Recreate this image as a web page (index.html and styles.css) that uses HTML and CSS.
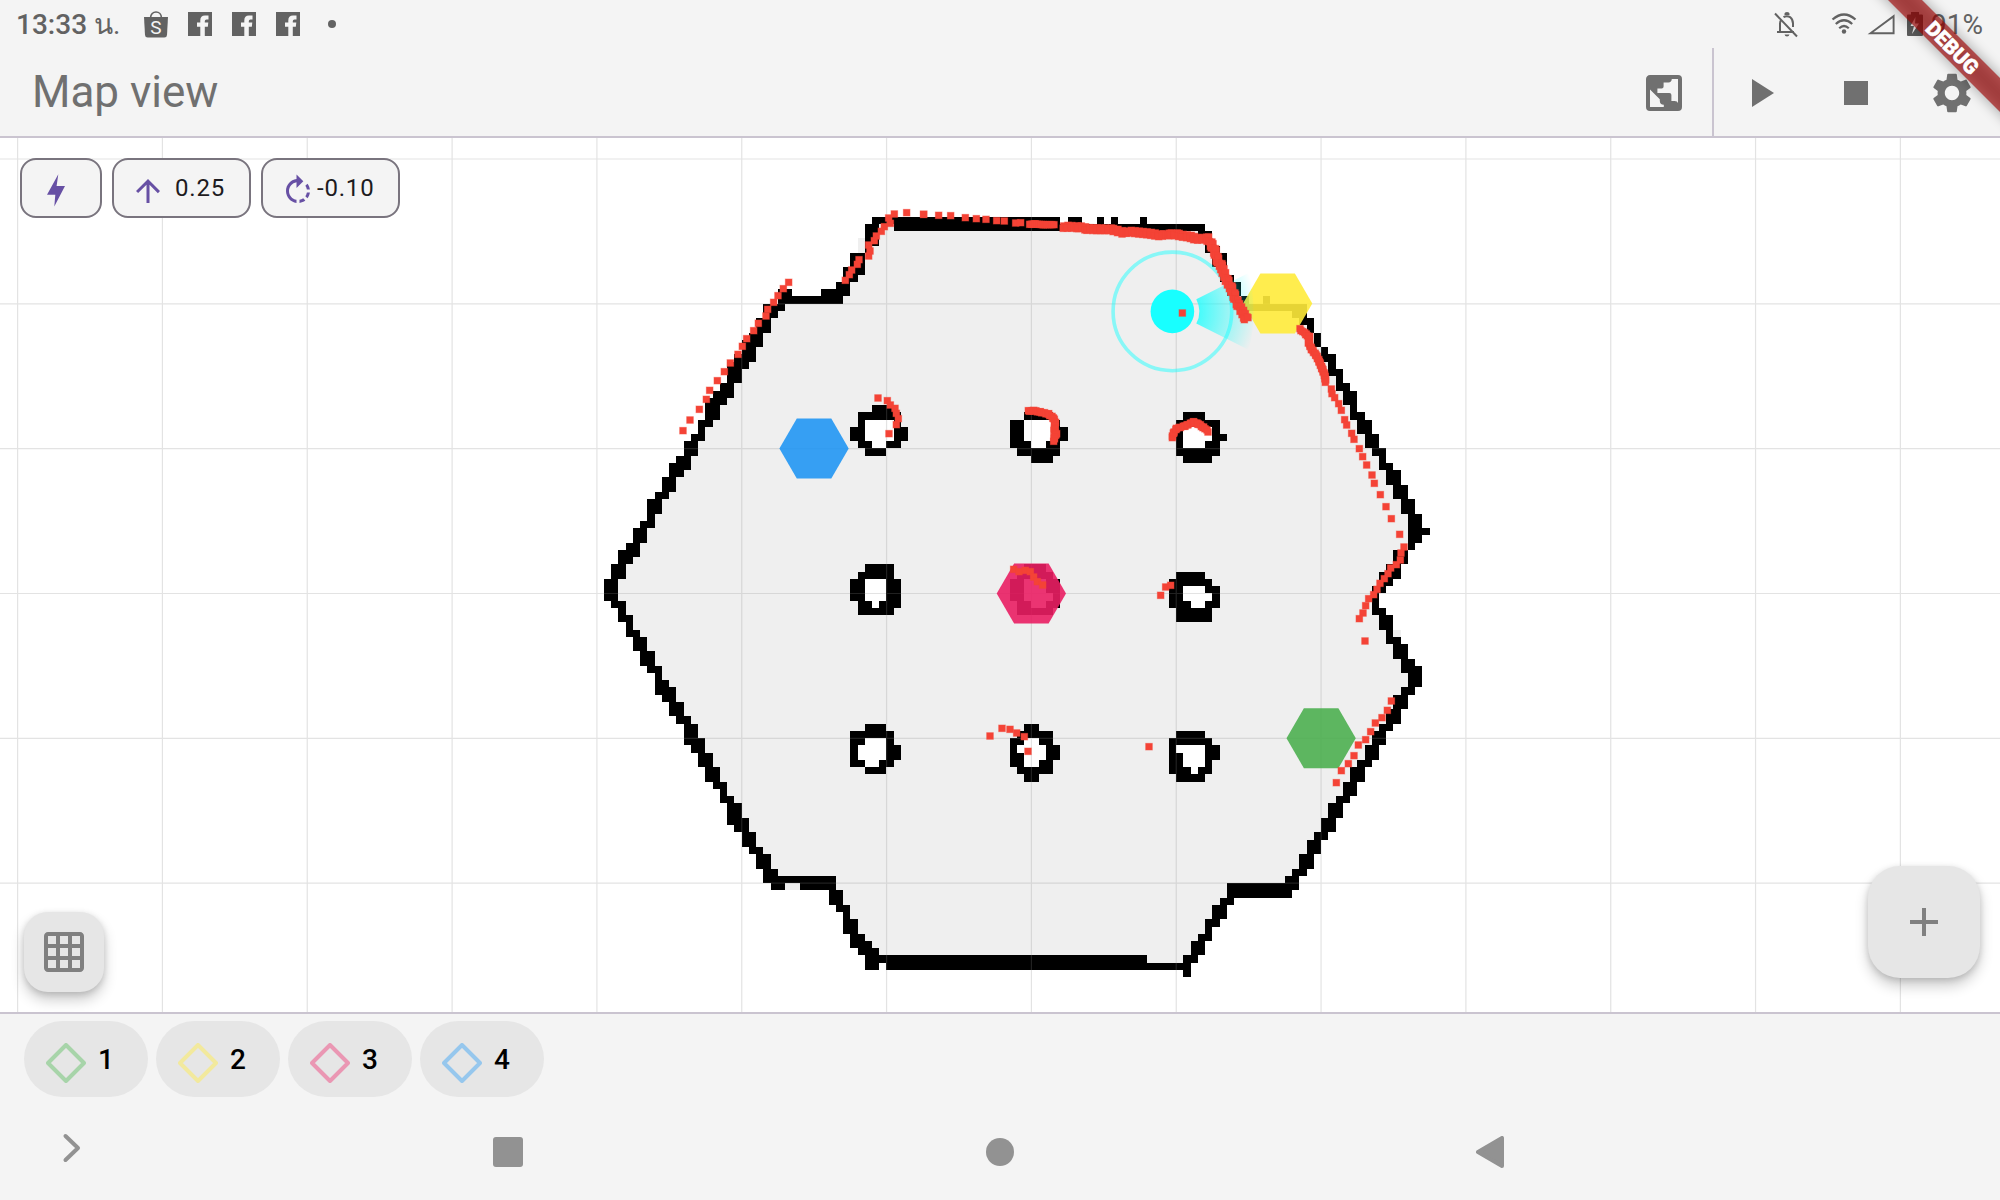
FILE: index.html
```html
<!DOCTYPE html>
<html lang="en">
<head>
<meta charset="utf-8">
<title>Map view</title>
<link rel="stylesheet" href="styles.css">
</head>
<body>
<div class="app">
  <header class="status">
    <div class="status-left">
      <span class="clock">13:33 <span class="thai">น.</span></span>
      <svg class="bag" width="24" height="28" viewBox="0 0 24 28"><path d="M6.500 7C6.500 -1 17.500 -1 17.500 7" fill="none" stroke="#626262" stroke-width="1.700"/><path d="M0 6h24l-1 18q-.2 2.500-2.700 2.500H3.700Q1.200 26.500 1 24z" fill="#626262"/><text x="12" y="22.800" text-anchor="middle" class="bag-letter">S</text></svg>
      <svg class="fb" width="24" height="24" viewBox="0 0 24 24"><path d="M0 0h24v24h-7.200v-9.300h3l.5-4.200h-3.500V9.100q0-1.600 1.700-1.600h2v-4H17q-4.700 0-4.700 4.700v2.300H9v4.200h3.300V24H0z"/></svg>
      <svg class="fb" width="24" height="24" viewBox="0 0 24 24"><path d="M0 0h24v24h-7.200v-9.300h3l.5-4.200h-3.500V9.100q0-1.600 1.700-1.600h2v-4H17q-4.700 0-4.700 4.700v2.300H9v4.200h3.300V24H0z"/></svg>
      <svg class="fb" width="24" height="24" viewBox="0 0 24 24"><path d="M0 0h24v24h-7.200v-9.300h3l.5-4.200h-3.500V9.100q0-1.600 1.700-1.600h2v-4H17q-4.700 0-4.700 4.700v2.300H9v4.200h3.300V24H0z"/></svg>
      <span class="dot"></span>
    </div>
    <div class="status-right">
      <svg class="bell" width="24" height="26" viewBox="0 0 24 26" fill="none" stroke="#626262" stroke-width="2"><path d="M1 1.500 23 24.500M3 20h17M6 20v-8.500q0-2.500 1.500-4.200M9.500 5.200Q13 3 16.500 5.400 19 7.500 19 11.500V15"/><path d="M10.500 3V1.500Q10.500 0 13 0T15.500 1.500V3zM10.500 22.500h5q-.5 2-2.500 2t-2.500-2z" fill="#626262" stroke="none"/></svg>
      <svg class="wifi" width="26" height="22" viewBox="0 0 26 22" fill="none" stroke="#626262" stroke-width="2.200"><path d="M1.500 6.500Q13-3.500 24.500 6.500M4.800 11Q13 3.500 21.200 11M8.200 15.200Q13 10.800 17.800 15.200"/><circle cx="13" cy="18.500" r="2.200" fill="#626262" stroke="none"/></svg>
      <svg class="signal" width="28" height="21" viewBox="0 0 28 21"><path d="M3.500 19.200H26.600V2.200z" fill="none" stroke="#626262" stroke-width="1.900"/></svg>
      <svg class="battery" width="16" height="24" viewBox="0 0 16 24"><path d="M4 0h8v2.500h3q1 0 1 1V23q0 1-1 1H1q-1 0-1-1V3.500q0-1 1-1h3z" fill="#5c5c5c"/><path d="M8.500 5 3.500 14H7l-2 8 7-10.500H8z" fill="#f4f4f4"/></svg>
      <span class="level">91%</span>
    </div>
  </header>

  <div class="appbar">
    <h1 class="title">Map view</h1>
    <div class="actions">
      <svg class="act globe" viewBox="0 0 24 24"><path fill-rule="evenodd" d="M5 3h14a2 2 0 0 1 2 2v14a2 2 0 0 1-2 2H5a2 2 0 0 1-2-2V5c0-1.100.9-2 2-2zM19 17V5h-3.100q-.1 1.700-1.700 1.700h-2.400v2q0 1-1 1H8.700V12h6q1 0 1 1v3h1.600q1.400 0 1.700 1zM5 10.300V19h6.900v-1.100q-2-.1-2-2v-.8z"/></svg>
      <div class="run">
        <svg class="act" viewBox="0 0 24 24"><path d="M8 5v14l11-7z"/></svg>
        <svg class="act stop" viewBox="0 0 24 24"><path d="M6 6h12v12H6z"/></svg>
        <svg class="act" viewBox="0 0 24 24"><path d="M19.140 12.940c.04-.3.06-.61.06-.94 0-.32-.02-.64-.07-.94l2.030-1.580c.18-.14.230-.41.120-.61l-1.920-3.320c-.12-.22-.37-.29-.59-.22l-2.390.96c-.5-.38-1.030-.7-1.620-.94l-.36-2.540c-.04-.24-.24-.41-.48-.41h-3.840c-.24 0-.43.170-.47.410l-.36 2.540c-.59.24-1.130.57-1.620.94l-2.390-.96c-.22-.08-.47 0-.59.22L2.740 8.870c-.12.21-.08.470.12.610l2.030 1.580c-.05.3-.09.630-.09.940s.02.640.07.940l-2.030 1.580c-.18.140-.23.410-.12.610l1.920 3.320c.12.220.37.290.59.220l2.390-.96c.5.380 1.030.7 1.620.940l.36 2.540c.05.240.24.410.48.410h3.840c.24 0 .44-.17.470-.41l.36-2.540c.59-.24 1.130-.56 1.620-.94l2.390.96c.22.080.470 0 .59-.22l1.920-3.320c.12-.22.070-.47-.12-.61l-2.010-1.580zM12 15.600c-1.980 0-3.600-1.620-3.600-3.600s1.620-3.600 3.600-3.600 3.600 1.620 3.600 3.600-1.620 3.600-3.600 3.600z"/></svg>
      </div>
    </div>
  </div>

  <main class="map">
    <svg class="canvas" viewBox="0 138 2000 874" width="2000" height="874">
      <defs>
        <radialGradient id="beam" gradientUnits="userSpaceOnUse" cx="1172.400" cy="311.400" r="85">
          <stop offset=".3" stop-color="#18ffff" stop-opacity=".8"/>
          <stop offset="1" stop-color="#18ffff" stop-opacity="0"/>
        </radialGradient>
      </defs>
      <g shape-rendering="crispEdges">
        <path id="free" fill="#efefef"/>
        <path id="unknown" fill="#fff"/>
        <path id="wall" fill="#000"/>
      </g>
      <path id="grid" fill="none" stroke="#888" stroke-opacity=".24" stroke-width="1.200"/>
      <g opacity=".9">
        <path fill="#2196f3" d="M779.400 448.400l17.400-30h34.500l17.400 30-17.400 30h-34.500z"/>
        <path fill="#e91e63" d="M996.700 593.400l17.400-30h34.500l17.400 30-17.400 30h-34.500z"/>
        <path fill="#4caf50" d="M1286.500 738.200l17.400-30h34.500l17.400 30-17.400 30h-34.500z"/>
        <path fill="#ffeb3b" d="M1243 303.600l17.400-30h34.500l17.400 30-17.400 30h-34.500z"/>
      </g>
      <circle cx="1172.400" cy="311.400" r="59.300" fill="none" stroke="#18ffff" stroke-opacity=".48" stroke-width="3.600"/>
      <path fill="url(#beam)" d="M1196.300 299.200L1249 272.800Q1258 311.400 1249 350L1196.300 323.600A26.800 26.800 0 0 0 1196.300 299.200z"/>
      <circle cx="1172.400" cy="311.400" r="21.800" fill="#18ffff"/>
      <g id="scan" fill="#f44336"></g>
    </svg>

    <div class="stats">
      <div class="stat stat-bolt"><svg class="ico" viewBox="0 0 36 36"><path d="M20.300 1.300 9 21.700h8.300L16.300 33.400 27 13h-8.400z"/></svg></div>
      <div class="stat stat-up"><svg class="ico" viewBox="0 0 24 24"><path d="M4 12l1.410 1.410L11 7.830V20h2V7.830l5.580 5.590L20 12l-8-8-8 8z"/></svg><span>0.25</span></div>
      <div class="stat stat-rot"><svg class="ico" viewBox="0 0 24 24"><path d="M15.550 5.550L11 1v3.070C7.060 4.560 4 7.920 4 12s3.050 7.440 7 7.930v-2.020c-2.840-.48-5-2.940-5-5.910s2.160-5.430 5-5.910V10l4.550-4.450zM19.930 11c-.17-1.390-.72-2.730-1.620-3.890l-1.420 1.420c.54.75.88 1.600 1.020 2.470h2.020zM13 17.900v2.020c1.390-.17 2.740-.71 3.900-1.610l-1.440-1.440c-.75.540-1.590.890-2.460 1.030zm3.890-2.420l1.420 1.410c.9-1.160 1.450-2.500 1.620-3.890h-2.020c-.14.870-.48 1.720-1.020 2.480z"/></svg><span>-0.10</span></div>
    </div>

    <div class="fab fab-grid"><svg viewBox="0 0 24 24"><path fill-rule="evenodd" d="M20 2H4c-1.100 0-2 .9-2 2v16c0 1.100.9 2 2 2h16c1.100 0 2-.9 2-2V4c0-1.100-.9-2-2-2zM8 20H4v-4h4v4zm0-6H4v-4h4v4zm0-6H4V4h4v4zm6 12h-4v-4h4v4zm0-6h-4v-4h4v4zm0-6h-4V4h4v4zm6 12h-4v-4h4v4zm0-6h-4v-4h4v4zm0-6h-4V4h4v4z"/></svg></div>
    <div class="fab fab-add"><svg viewBox="0 0 24 24"><path d="M19 13h-6v6h-2v-6H5v-2h6V5h2v6h6v2z"/></svg></div>
  </main>

  <div class="markers">
    <div class="chip"><svg class="gem green" viewBox="0 0 40 40"><path d="M20 2 38 20 20 38 2 20z"/></svg><span>1</span></div>
    <div class="chip"><svg class="gem yellow" viewBox="0 0 40 40"><path d="M20 2 38 20 20 38 2 20z"/></svg><span>2</span></div>
    <div class="chip"><svg class="gem pink" viewBox="0 0 40 40"><path d="M20 2 38 20 20 38 2 20z"/></svg><span>3</span></div>
    <div class="chip"><svg class="gem blue" viewBox="0 0 40 40"><path d="M20 2 38 20 20 38 2 20z"/></svg><span>4</span></div>
  </div>

  <nav class="nav">
    <svg class="chev" width="20" height="32" viewBox="0 0 20 32"><path d="M3.500 4 16 16 3.500 28" fill="none" stroke="#929292" stroke-width="4" stroke-linecap="round" stroke-linejoin="round"/></svg>
    <span class="recent"></span>
    <span class="home"></span>
    <svg class="back" width="28" height="32" viewBox="0 0 28 32"><path d="M2 16 26 2V30z" fill="#929292" stroke="#929292" stroke-width="4" stroke-linejoin="round"/></svg>
  </nav>

  <svg class="banner" width="200" height="200" viewBox="1800 0 200 200">
    <defs><filter id="soft" x="-20%" y="-200%" width="140%" height="500%"><feGaussianBlur stdDeviation="7"/></filter></defs>
    <g transform="rotate(45 1952.500 47.500)">
      <rect x="1840" y="35.500" width="225" height="24" fill="#000" opacity=".34" filter="url(#soft)"/>
      <rect x="1840" y="35.500" width="225" height="24" fill="#a00000" opacity=".627"/>
      <text x="1952.500" y="55" text-anchor="middle" class="banner-text">DEBUG</text>
    </g>
  </svg>
</div>
<script src="map.js"></script>
</body>
</html>
```

FILE: styles.css
```css
* { box-sizing: border-box; }
body { margin: 0; background: #f4f4f4; font-family: Roboto, "Noto Sans", sans-serif; }
.app { position: relative; width: 2000px; height: 1200px; display: flex; flex-direction: column; overflow: hidden; background: #f4f4f4; }

.status { height: 48px; flex: none; display: flex; justify-content: space-between; color: #626262; font-size: 28px; font-weight: 500; line-height: 48px; padding: 0 17px 0 16px; }
.status-left, .status-right { display: flex; align-items: flex-start; }
.clock { width: 128px; white-space: nowrap; padding-top: 1px; }
.thai { font-weight: 400; }
.bag { margin: 11px 20px 0 0; }
.bag-letter { font: 400 19px Roboto, sans-serif; fill: #f4f4f4; }
.fb { margin: 12px 20px 0 0; fill: #626262; }
.dot { width: 8px; height: 8px; border-radius: 4px; background: #626262; margin: 20px 0 0 8px; }
.bell { margin: 12px 33px 0 0; }
.wifi { margin: 13px 10px 0 0; }
.signal { margin: 14px 12px 0 0; }
.battery { margin: 12px 8px 0 0; }
.level { padding-top: 1px; width: 52px; font-weight: 400; white-space: nowrap; }

.appbar { height: 90px; flex: none; display: flex; justify-content: space-between; border-bottom: 2px solid #cac4d0; }
.title { margin: 0; padding-left: 32px; font-size: 44px; font-weight: 400; line-height: 89px; height: 88px; color: #707070; }
.actions { display: flex; }
.act { width: 48px; height: 48px; fill: #707070; flex: none; }
.globe { margin: 21px 24px 0 0; }
.run { display: flex; gap: 48px; border-left: 2px solid #cac4d0; padding: 21px 24px 0 22px; }

.map { position: relative; height: 874px; flex: none; background: #fff; overflow: hidden; }
.canvas { display: block; }
.stats { position: absolute; left: 20px; top: 20px; display: flex; gap: 10px; }
.stat { height: 60px; border: 2px solid #79747e; border-radius: 16px; background: #f4f4f4; display: flex; align-items: center; color: #1d1b20; font-size: 24px; letter-spacing: .8px; padding-left: 17px; white-space: nowrap; }
.stat-bolt { width: 82px; padding-left: 16px; }
.stat-up { width: 139px; gap: 9px; padding-left: 16px; }
.stat-rot { width: 139px; gap: 1px; }
.ico { width: 36px; height: 36px; fill: #6750a4; position: relative; top: 3px; flex: none; }

.fab { position: absolute; background: #e6e6e6; display: flex; align-items: center; justify-content: center; box-shadow: 0 8px 14px rgba(0,0,0,.2), 0 2px 6px rgba(0,0,0,.14); }
.fab svg { width: 48px; height: 48px; fill: #808080; }
.fab-grid { left: 24px; bottom: 20px; width: 80px; height: 80px; border-radius: 24px; }
.fab-add { right: 20px; bottom: 34px; width: 112px; height: 112px; border-radius: 32px; }

.markers { height: 94px; flex: none; border-top: 2px solid #cac4d0; display: flex; gap: 8px; padding: 7px 24px 0; }
.chip { width: 124px; height: 76px; border-radius: 38px; background: #e6e6e6; display: flex; align-items: center; gap: 12px; padding-left: 22px; font-size: 28px; font-weight: 500; color: #000; }
.gem { width: 40px; height: 40px; margin-top: 8px; fill: none; stroke-width: 4px; stroke-linejoin: round; }
.green { stroke: #a7d4a9; }
.yellow { stroke: #f2e99d; }
.pink { stroke: #ea97b3; }
.blue { stroke: #96c7ed; }

.nav { flex: 1; display: flex; align-items: flex-start; }
.chev { margin: 26px 0 0 62px; }
.recent { width: 30px; height: 30px; border-radius: 3px; background: #929292; margin: 31px 0 0 411px; }
.home { width: 28px; height: 28px; border-radius: 14px; background: #929292; margin: 32px 0 0 463px; }
.back { margin: 30px 0 0 462px; }

.banner { position: absolute; right: 0; top: 0; }
.banner-text { font: 900 20.400px Roboto, sans-serif; fill: #fff; stroke: #fff; stroke-width: .5px; }
```

FILE: map.js
```js
// Occupancy grid, one entry per row: wall runs left of "|" and right of it.
// The cells between the two sides are free space.
const walls = `37-63 64-66 68-69 70-71 74-75
36-38|40-83
36-38|82-84
36-38|83-84
36-37|83-85
34-36|84-86
34-36|84-86
33-36|85-86
33-35|85-87
32-34|86-88
24-26 30-34|86-88
24-33|88-89 91-92
22-25|88-97
22-24|95-97
21-23|96-98
21-23|97-98
20-22|98-99
19-22|98-99
19-21|99-100
18-21|99-101
17-20|100-101
17-19|100-102
17-19|101-102
16-18|101-103
15-18|102-104
14-17|102-104
14-16|103-104
14-16|103-105
13-15|104-106
13-14|104-106
12-14|105-107
11-13|105-107
11-13|106-108
10-12|107-108
9-12|107-109
9-11|108-110
8-10|108-110
8-10|109-111
7-9|109-111
6-8|110-112
6-8|110-112
6-7|111-113
5-7|111-113
4-6|111-114
4-6|111-113
3-5|111-112
2-5|109-111
2-4|109-111
1-3|108-110
1-3|107-110
0-2|107-109
0-2|106-108
0-2|106-107
1-3|106-107
2-3|106-108
2-4|107-109
3-4|107-109
3-5|108-109
4-6|108-110
4-6|109-111
5-7|109-111
5-7|110-112
6-8|110-113
7-8|111-113
7-9|111-113
7-10|110-112
8-10|109-111
9-11|109-111
9-11|108-110
10-12|108-110
11-13|107-109
11-13|106-108
11-14|106-108
12-14|105-107
13-15|105-107
13-15|104-106
14-16|103-105
14-16|103-105
15-17|102-104
16-17|102-104
16-18|101-103
17-19|100-102
17-19|100-102
17-20|99-101
18-20|99-101
19-21|98-100
19-21|97-99
20-22|97-99
21-23|96-98
21-23|96-98
22-24|95-97
22-32|94-96
23-25 27-32|86-96
31-33|86-95
31-33|85-87
32-34|84-86
33-34|84-86
33-35|83-85
33-35|83-84
34-36|82-84
34-37|81-83
35-38|81-83
36-75|80-82
36-38 39-81
80-81`.split("\n");

// Pillars: first row, then wall runs per row. Cells enclosed by a row's runs are unknown.
const pillars = [
  [26, "37-40", "35-41", "35-36 40-41", "34-36 40-42", "34-36 40-42", "35-37 39-41", "36-39"],
  [27, "58-62", "56-58 62-63", "56-58 62-64", "56-58 62-64", "56-59 61-63", "57-63", "59-62"],
  [27, "80-83", "79-85", "79-80 84-85", "79-80 84-86", "79-80 83-85", "79-85", "80-84"],
  [48, "36-40", "35-40", "34-36 39-41", "34-36 39-41", "34-36 39-41", "35-37 38-41", "35-40"],
  [48, "58-61", "57-62", "56-58 61-63", "56-58 61-63", "56-58 62-63", "57-59 61-63", "57-62"],
  [49, "79-83", "78-84", "78-80 83-85", "78-80 84-85", "78-81 83-85", "79-84", "79-84"],
  [70, "36-39", "34-40", "34-36 39-40", "34-35 39-41", "34-35 39-41", "34-36 38-40", "36-39"],
  [70, "58-60", "57-62", "56-58 60-62", "56-57 61-63", "56-58 61-63", "56-58 60-62", "57-62", "58-60"],
  [71, "79-83", "78-84", "78-79 83-85", "78-80 83-85", "78-80 83-84", "78-81 82-84", "79-83"]
];

const X = c => Math.round(604 + 7.243 * c);
const Y = r => Math.round(216.7 + 7.243 * r);
const cell = (a, b, r) => `M${X(a)} ${Y(r)}H${X(b)}V${Y(r + 1)}H${X(a)}z`;
const parse = s => s.trim().split(" ").map(t => t.split("-").map(Number));
let wall = "", free = "", unknown = "";

walls.forEach((line, r) => {
  const sides = line.split("|").map(parse);
  sides.flat().forEach(([a, b]) => { wall += cell(a, b, r); });
  if (sides[1]) free += cell(sides[0][sides[0].length - 1][1], sides[1][0][0], r);
});
pillars.forEach(([top, ...rows]) => rows.forEach((s, i) => {
  const runs = parse(s);
  runs.forEach(([a, b]) => { wall += cell(a, b, top + i); });
  if (runs[1]) unknown += cell(runs[0][1], runs[1][0], top + i);
}));
// Stray free cells
free += cell(35, 36, 3) + cell(35, 36, 4) + cell(109, 110, 57) + cell(25, 27, 92);
document.getElementById("wall").setAttribute("d", wall);
document.getElementById("free").setAttribute("d", free);
document.getElementById("unknown").setAttribute("d", unknown);

// One-metre grid
let grid = "";
for (let i = 0; i < 14; i++) grid += `M${17.6 + 144.83 * i} 138V1012`;
for (let i = 0; i < 6; i++) grid += `M0 ${159 + 144.83 * i}H2000`;
document.getElementById("grid").setAttribute("d", grid);

// Laser scan: [origin x, origin y, "points in thirds of a pixel"]
const points = [
  [590, 200, "279,692 300,660 328,628 349,598 359,571 382,542 403,515 421,489 444,463 457,439 470,416 491,392 505,370 528,348 533,328 551,307 564,287 580,266 596,247 766,241 778,224 785,210 802,193 807,179 836,168 840,153 836,135 853,122 859,108 874,94 883,80 901,70 896,54 913,42 950,38 1001,43 864,594 892,602 901,615 915,625 919,640 925,656 919,674 897,701"],
  [900, 200, "71,43 116,46 152,47 196,53 229,56 258,58 290,62 313,63 347,69 362,68 847,339"],
  [1150, 220, "544,507 546,521 554,533 566,551 574,571 584,599 590,615 605,640 612,658 628,686 638,710"],
  [1150, 440, "650,75 666,105 673,130 691,164 708,200 724,236 749,283 762,321 753,339 751,360 739,374 722,384 714,401 703,416 690,430 681,448 671,464 656,476 647,497 639,519 628,536 645,603 724,783 712,811 696,833 676,849 662,875 647,899 625,915 612,947 595,971 574,992 559,1028 32,466 47,441 62,436"],
  [900, 520, "270,648 306,625 330,628 350,639 373,650 384,694 747,680 341,148 357,155 376,151 391,155 401,171 412,185 428,195"]
];
// Dense stretches: vertices are filled in along the way, with an optional spread
const chains = [
  [900, 200, 0, "389,73 405,72 430,74 462,74"],
  [900, 200, 4, "487,82 500,80 540,82 565,87 600,88 630,88 650,92 670,98 690,95 720,98 750,101 780,106 810,103 828,103 845,107 870,110 890,117 910,116 922,115 935,135 945,155 952,180 962,195 968,210 980,240 992,262 1003,288 1015,315 1030,340 1037,355 1044,353"],
  [900, 200, 1, "384,633 400,632 420,636 445,642 460,654 466,668 463,690 469,702 463,712 462,723"],
  [900, 200, 1, "816,714 820,700 830,685 855,678 880,666 895,672 910,682 925,695"],
  [1150, 220, 1, "449,327 468,343 478,350 476,368 485,388 498,405 508,425 516,445 524,465 527,486"]
];
let dots = "";
const dot = (x, y) => {
  dots += `<rect x="${(x - 3.8).toFixed(2)}" y="${(y - 3.8).toFixed(2)}" width="7.6" height="7.6" fill-opacity=".5"/>`
        + `<rect x="${(x - 3.3).toFixed(2)}" y="${(y - 3.3).toFixed(2)}" width="6.6" height="6.6"/>`;
};
const pairs = s => s.split(" ").map(p => p.split(",").map(Number));
points.forEach(([ox, oy, s]) => pairs(s).forEach(([x, y]) => dot(ox + x / 3, oy + y / 3)));
chains.forEach(([ox, oy, spread, s]) => {
  const p = pairs(s);
  let k = 0;
  for (let i = 1; i < p.length; i++) {
    const [x0, y0] = p[i - 1], [x1, y1] = p[i];
    const n = Math.max(1, Math.round(Math.hypot(x1 - x0, y1 - y0) / 6));
    for (let j = 0; j <= n; j++) {
      const w = spread * [1, -1, 0, 1, -1][k++ % 5];
      dot(ox + (x0 + (x1 - x0) * j / n + w) / 3, oy + (y0 + (y1 - y0) * j / n - w) / 3);
    }
  }
});
document.getElementById("scan").innerHTML = dots;
```
